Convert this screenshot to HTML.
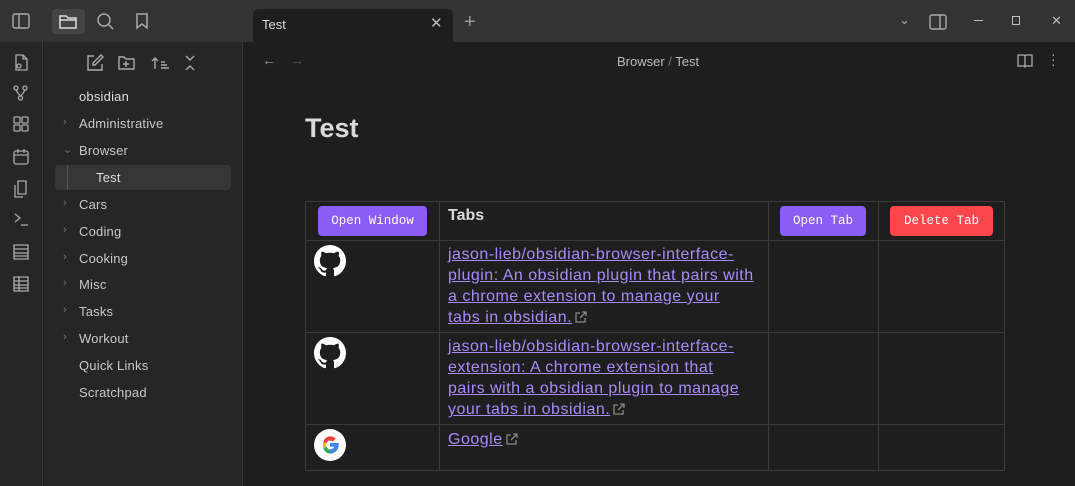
<!DOCTYPE html>
<html><head><style>
*{margin:0;padding:0;box-sizing:border-box}
body{width:1075px;height:486px;background:#1e1e1e;font-family:"Liberation Sans",sans-serif;color:#dadada;position:relative;overflow:hidden}
.a{position:absolute}
.top{left:0;top:0;width:1075px;height:42px;background:#333}
.rib{left:0;top:42px;width:43px;height:444px;background:#262626;border-right:1px solid #363636}
.side{left:44px;top:42px;width:199px;height:444px;background:#262626;border-right:1px solid #363636}
.it{position:absolute;left:79px;font-size:13px;color:#c8c8c8;letter-spacing:0.2px}
.ch{position:absolute;left:63px;font-size:11px;color:#777}
svg{position:absolute}
.btn{position:absolute;top:206px;height:30px;border-radius:4px;color:#fff;font-family:"Liberation Mono",monospace;font-size:12.5px;display:flex;align-items:center;justify-content:center}
.lk{position:absolute;left:448px;font-size:16px;line-height:21px;color:#a88bfa;white-space:nowrap;letter-spacing:0.5px}
.lk span{text-decoration:underline}
.ex{position:relative!important;display:inline-block;vertical-align:-1px;margin-left:3px}
</style></head><body>
<div class="a top"></div>
<div class="a" style="left:52px;top:9px;width:33px;height:25px;background:#444;border-radius:4px"></div>
<svg style="left:12px;top:13px" width="18" height="16" fill="none" stroke="#aaa" stroke-width="1.4"><rect x="1" y="1" width="16" height="14" rx="2"/><line x1="7" y1="1" x2="7" y2="15"/></svg>
<svg style="left:59px;top:13px" width="18" height="16" fill="none" stroke="#ddd" stroke-width="1.5"><path d="M1 3h6l2 2h8v10H1z M1 7h16"/></svg>
<svg style="left:96px;top:12px" width="18" height="18" fill="none" stroke="#aaa" stroke-width="1.5"><circle cx="8" cy="8" r="6"/><line x1="12.5" y1="12.5" x2="17" y2="17"/></svg>
<svg style="left:135px;top:12px" width="14" height="18" fill="none" stroke="#aaa" stroke-width="1.5"><path d="M2 2h10v14l-5-4-5 4z"/></svg>
<div class="a" style="left:253px;top:9px;width:200px;height:33px;background:#1e1e1e;border-radius:6px 6px 0 0"></div>
<div class="a" style="left:262px;top:17px;font-size:13px;color:#ddd">Test</div>
<div class="a" style="left:430px;top:14px;font-size:15px;color:#bbb">✕</div>
<div class="a" style="left:464px;top:11px;font-size:20px;color:#999">+</div>
<div class="a" style="left:899px;top:12px;font-size:13px;color:#aaa">⌄</div>
<svg style="left:929px;top:14px" width="18" height="16" fill="none" stroke="#aaa" stroke-width="1.4"><rect x="1" y="1" width="16" height="14" rx="2"/><line x1="11" y1="1" x2="11" y2="15"/></svg>
<div class="a" style="left:974px;top:20px;width:9px;height:1px;background:#bbb"></div>
<div class="a" style="left:1012px;top:16px;width:8px;height:9px;border:1.3px solid #bbb"></div>
<div class="a" style="left:1051px;top:13px;font-size:13px;color:#bbb">✕</div>
<div class="a rib"></div>
<div class="a side"></div>
<svg style="left:12px;top:53px" width="18" height="240" fill="none" stroke="#aaa" stroke-width="1.3">
<path d="M4 2h7l4 4v11H4z M11 2v4h4"/><circle cx="7" cy="13" r="2"/>
<circle cx="4" cy="35" r="2"/><circle cx="13" cy="35" r="2"/><circle cx="8.5" cy="45" r="2"/><path d="M4 37l4 6 M13 37l-4 6"/>
<rect x="2" y="64" width="6" height="6" rx="1"/><rect x="10" y="64" width="6" height="6" rx="1"/><rect x="2" y="72" width="6" height="6" rx="1"/><rect x="10" y="72" width="6" height="6" rx="1"/>
<rect x="2" y="98" width="14" height="13" rx="2"/><path d="M2 102h14 M6 96v4 M12 96v4"/>
<path d="M6 128h8v13H6z M3 132v12h8"/>
<path d="M3 161l5 4-5 4 M9 172h7"/>
<path d="M2 192h14v14H2z M2 196h14 M2 200h14 M2 203h14"/>
<path d="M2 224h14v14H2z M2 228h14 M2 232h14 M2 235h14 M7 224v14"/></svg>
<svg style="left:86px;top:54px" width="120" height="18" fill="none" stroke="#aaa" stroke-width="1.4">
<path d="M8 2H2v14h14v-6 M15 1l2 2-8 8H7V9z"/>
<path d="M33 3h5l2 2h8v10H33z M40 7v6 M37 10h6"/>
<path d="M69 4v11 M66 7l3-3 3 3 M75 8h4 M75 11h6 M75 14h8"/>
<path d="M100 2l4 4 4-4 M100 16l4-4 4 4"/></svg>
<div class="it" style="top:89px;color:#ddd">obsidian</div>
<div class="ch" style="top:116px">›</div><div class="it" style="top:116px">Administrative</div>
<div class="ch" style="top:143px">⌄</div><div class="it" style="top:143px">Browser</div>
<div class="a" style="left:55px;top:165px;width:176px;height:25px;background:#363636;border-radius:4px"></div>
<div class="a" style="left:67px;top:165px;width:1px;height:25px;background:#555"></div>
<div class="it" style="top:170px;left:96px;color:#ddd">Test</div>
<div class="ch" style="top:197px">›</div><div class="it" style="top:197px">Cars</div>
<div class="ch" style="top:224px">›</div><div class="it" style="top:224px">Coding</div>
<div class="ch" style="top:251px">›</div><div class="it" style="top:251px">Cooking</div>
<div class="ch" style="top:277px">›</div><div class="it" style="top:277px">Misc</div>
<div class="ch" style="top:304px">›</div><div class="it" style="top:304px">Tasks</div>
<div class="ch" style="top:331px">›</div><div class="it" style="top:331px">Workout</div>
<div class="it" style="top:358px">Quick Links</div>
<div class="it" style="top:385px">Scratchpad</div>
<div class="a" style="left:262px;top:52px;font-size:14px;color:#999">←</div>
<div class="a" style="left:290px;top:52px;font-size:14px;color:#555">→</div>
<div class="a" style="left:617px;top:54px;font-size:13px;color:#bbb">Browser <span style="color:#777">/</span> Test</div>
<svg style="left:1017px;top:54px" width="16" height="14" fill="none" stroke="#aaa" stroke-width="1.3"><path d="M1 1h6l1 1 1-1h6v11H9l-1 1-1-1H1z M8 2v11"/></svg>
<div class="a" style="left:1051px;top:52px;font-size:14px;color:#aaa;line-height:5px">·<br>·<br>·</div>
<div class="a" style="left:305px;top:113px;font-size:27px;font-weight:bold;color:#dadada">Test</div>
<div class="a" style="left:305px;top:201px;width:700px;height:270px;border:1px solid #3a3a3a"></div>
<div class="a" style="left:439px;top:201px;width:1px;height:270px;background:#3a3a3a"></div>
<div class="a" style="left:768px;top:201px;width:1px;height:270px;background:#3a3a3a"></div>
<div class="a" style="left:878px;top:201px;width:1px;height:270px;background:#3a3a3a"></div>
<div class="a" style="left:305px;top:240px;width:700px;height:1px;background:#3a3a3a"></div>
<div class="a" style="left:305px;top:332px;width:700px;height:1px;background:#3a3a3a"></div>
<div class="a" style="left:305px;top:424px;width:700px;height:1px;background:#3a3a3a"></div>
<div class="btn" style="left:318px;width:109px;background:#8b5cf6">Open Window</div>
<div class="btn" style="left:780px;width:86px;background:#8b5cf6">Open Tab</div>
<div class="btn" style="left:890px;width:103px;background:#fb464c">Delete Tab</div>
<div class="a" style="left:448px;top:207px;font-size:16px;font-weight:bold;color:#dadada">Tabs</div>
<svg style="left:314px;top:245px" width="32" height="32" viewBox="0 0 16 16"><path fill="#fff" d="M8 0C3.58 0 0 3.58 0 8c0 3.54 2.29 6.53 5.47 7.59.4.07.55-.17.55-.38 0-.19-.01-.82-.01-1.49-2.01.37-2.53-.49-2.69-.94-.09-.23-.48-.94-.82-1.13-.28-.15-.68-.52-.01-.53.63-.01 1.08.58 1.23.82.72 1.21 1.87.87 2.33.66.07-.52.28-.87.51-1.07-1.78-.2-3.640-.89-3.64-3.95 0-.87.31-1.59.82-2.15-.08-.2-.36-1.02.08-2.12 0 0 .67-.21 2.2.82.64-.18 1.32-.27 2-.27.68 0 1.36.09 2 .27 1.53-1.04 2.2-.82 2.2-.82.44 1.1.16 1.92.08 2.12.51.56.82 1.27.82 2.15 0 3.07-1.87 3.75-3.65 3.95.29.25.54.73.54 1.48 0 1.07-.01 1.93-.01 2.2 0 .21.15.46.55.38A8.013 8.013 0 0016 8c0-4.42-3.58-8-8-8z"/></svg>
<svg style="left:314px;top:337px" width="32" height="32" viewBox="0 0 16 16"><path fill="#fff" d="M8 0C3.58 0 0 3.58 0 8c0 3.54 2.29 6.53 5.47 7.59.4.07.55-.17.55-.38 0-.19-.01-.82-.01-1.49-2.01.37-2.53-.49-2.69-.94-.09-.23-.48-.94-.82-1.13-.28-.15-.68-.52-.01-.53.63-.01 1.08.58 1.23.82.72 1.21 1.87.87 2.33.66.07-.52.28-.87.51-1.07-1.78-.2-3.640-.89-3.64-3.95 0-.87.31-1.59.82-2.15-.08-.2-.36-1.02.08-2.12 0 0 .67-.21 2.2.82.64-.18 1.32-.27 2-.27.68 0 1.36.09 2 .27 1.53-1.04 2.2-.82 2.2-.82.44 1.1.16 1.92.08 2.12.51.56.82 1.27.82 2.15 0 3.07-1.87 3.75-3.65 3.95.29.25.54.73.54 1.48 0 1.07-.01 1.93-.01 2.2 0 .21.15.46.55.38A8.013 8.013 0 0016 8c0-4.42-3.58-8-8-8z"/></svg>
<svg style="left:314px;top:429px" width="32" height="32" viewBox="0 0 32 32"><circle cx="16" cy="16" r="16" fill="#fff"/>
<path d="M16 14h8.6c.2 1 .2 2 0 3.2A8.6 8.6 0 0116 24.6V20.4c2.1 0 3.6-1 4.2-2.6H16z" fill="#4285f4"/>
<path d="M9.3 18.5A7.1 7.1 0 0016 24.6v-4.2a3.8 3.8 0 01-3.4-2.4z" fill="#34a853"/>
<path d="M9.3 13.5a7 7 0 000 5l3.3-.5a4 4 0 010-4z" fill="#fbbc05"/>
<path d="M16 7.4a7.1 7.1 0 00-6.7 6.1l3.3.5A3.8 3.8 0 0116 11.6c1 0 2 .4 2.7 1l3-3A7.1 7.1 0 0016 7.4z" fill="#ea4335"/></svg>
<div class="lk" style="top:244px"><span>jason-lieb/obsidian-browser-interface-</span><br><span>plugin: An obsidian plugin that pairs with </span><br><span>a chrome extension to manage your </span><br><span>tabs in obsidian.</span><svg class="ex" width="12" height="12" fill="none" stroke="#888" stroke-width="1.3"><path d="M5 2H1v9h9V7 M7 1h4v4 M11 1L5 7"/></svg></div>
<div class="lk" style="top:336px"><span>jason-lieb/obsidian-browser-interface-</span><br><span>extension: A chrome extension that </span><br><span>pairs with a obsidian plugin to manage </span><br><span>your tabs in obsidian.</span><svg class="ex" width="12" height="12" fill="none" stroke="#888" stroke-width="1.3"><path d="M5 2H1v9h9V7 M7 1h4v4 M11 1L5 7"/></svg></div>
<div class="lk" style="top:429px"><span>Google</span><svg class="ex" width="12" height="12" fill="none" stroke="#888" stroke-width="1.3"><path d="M5 2H1v9h9V7 M7 1h4v4 M11 1L5 7"/></svg></div>
</body></html>
